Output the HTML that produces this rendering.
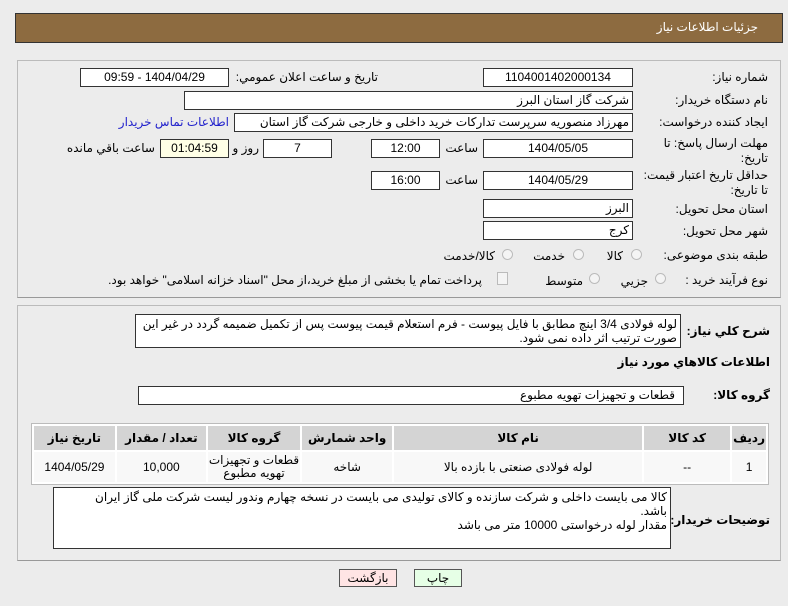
<!DOCTYPE html>
<html><head><meta charset="utf-8"><style>
body{margin:0;width:788px;height:606px;background:#ececec;font-family:"Liberation Sans","DejaVu Sans",sans-serif;font-size:12px;color:#000;position:relative;overflow:hidden;direction:rtl}
.a{position:absolute;white-space:nowrap}
.box{position:absolute;background:#fff;border:1px solid #333;box-sizing:border-box;height:19px;line-height:17px;text-align:center;font-size:12px}
.l{position:absolute;white-space:nowrap;text-align:right}
.b{font-weight:bold}
.r{position:absolute;width:11px;height:11px;border-radius:50%;border:1px solid #bbb;background:#f4f4f4;box-sizing:border-box}
table{border-collapse:separate;border-spacing:2px}
td,th{font-size:12px;text-align:center}
th{background:#d4d4d4;height:22px}
td{background:#f8f8f8;height:28px}
</style></head><body>
<div class="a" style="left:15px;top:13px;width:768px;height:30px;background:#8d6b40;border:1px solid #333;box-sizing:border-box"></div>
<div class="a" style="right:30px;top:20px;color:#fff;font-size:12px">جزئیات اطلاعات نیاز</div>

<div class="a" style="left:17px;top:60px;width:764px;height:238px;border:1px solid #bbb;border-bottom-color:#999;box-sizing:border-box"></div>

<div class="l" style="right:20px;top:70px">شماره نیاز:</div>
<div class="box" style="left:483px;top:68px;width:150px">1104001402000134</div>
<div class="l" style="right:410px;top:70px">تاریخ و ساعت اعلان عمومي:</div>
<div class="box" style="left:80px;top:68px;width:149px">1404/04/29 - 09:59</div>

<div class="l" style="right:20px;top:93px">نام دستگاه خریدار:</div>
<div class="box" style="left:184px;top:91px;width:449px;text-align:right;padding-right:3px">شرکت گاز استان البرز</div>

<div class="l" style="right:20px;top:115px">ایجاد کننده درخواست:</div>
<div class="box" style="left:234px;top:113px;width:399px;text-align:right;padding-right:3px;overflow:hidden">مهرزاد منصوریه سرپرست تدارکات خرید داخلی و خارجی شرکت گاز استان البرز</div>
<div class="l" style="right:559px;top:115px;color:#2222cc">اطلاعات تماس خریدار</div>

<div class="l" style="right:20px;top:136px;line-height:15px">مهلت ارسال پاسخ: تا<br>تاریخ:</div>
<div class="box" style="left:483px;top:139px;width:150px">1404/05/05</div>
<div class="l" style="right:310px;top:141px">ساعت</div>
<div class="box" style="left:371px;top:139px;width:69px">12:00</div>
<div class="box" style="left:263px;top:139px;width:69px">7</div>
<div class="l" style="right:529px;top:141px">روز و</div>
<div class="box" style="left:160px;top:139px;width:69px;background:#ffffe6">01:04:59</div>
<div class="l" style="right:633px;top:141px">ساعت باقي مانده</div>

<div class="l" style="right:20px;top:168px;line-height:15px">حداقل تاریخ اعتبار قیمت:<br>تا تاریخ:</div>
<div class="box" style="left:483px;top:171px;width:150px">1404/05/29</div>
<div class="l" style="right:310px;top:173px">ساعت</div>
<div class="box" style="left:371px;top:171px;width:69px">16:00</div>

<div class="l" style="right:20px;top:202px">استان محل تحویل:</div>
<div class="box" style="left:483px;top:199px;width:150px;text-align:right;padding-right:3px">البرز</div>
<div class="l" style="right:20px;top:224px">شهر محل تحویل:</div>
<div class="box" style="left:483px;top:221px;width:150px;text-align:right;padding-right:3px">کرج</div>

<div class="l" style="right:20px;top:248px">طبقه بندی موضوعی:</div>
<div class="r" style="left:631px;top:249px"></div><div class="l" style="right:165px;top:249px">کالا</div>
<div class="r" style="left:573px;top:249px"></div><div class="l" style="right:223px;top:249px">خدمت</div>
<div class="r" style="left:502px;top:249px"></div><div class="l" style="right:293px;top:249px">کالا/خدمت</div>

<div class="l" style="right:20px;top:273px">نوع فرآیند خرید :</div>
<div class="r" style="left:655px;top:273px"></div><div class="l" style="right:140px;top:274px">جزيي</div>
<div class="r" style="left:589px;top:273px"></div><div class="l" style="right:205px;top:274px">متوسط</div>
<div class="a" style="left:497px;top:272px;width:9px;height:11px;border:1px solid #bbb;background:#f4f4f4"></div>
<div class="l" style="right:306px;top:273px">پرداخت تمام یا بخشی از مبلغ خرید،از محل "اسناد خزانه اسلامی" خواهد بود.</div>

<div class="a" style="left:17px;top:305px;width:764px;height:256px;border:1px solid #bbb;border-bottom-color:#999;box-sizing:border-box"></div>
<div class="l b" style="right:18px;top:324px">شرح کلي نیاز:</div>
<div class="a" style="left:135px;top:314px;width:546px;height:34px;background:#fff;border:1px solid #333;box-sizing:border-box;white-space:normal;text-align:right;padding:2px 3px;line-height:14px">لوله فولادی 3/4 اینچ مطابق با فایل پیوست - فرم استعلام قیمت پیوست پس از تکمیل ضمیمه گردد در غیر این صورت ترتیب اثر داده نمی شود.</div>
<div class="l b" style="right:18px;top:355px">اطلاعات کالاهاي مورد نیاز</div>
<div class="l b" style="right:18px;top:388px">گروه کالا:</div>
<div class="box" style="left:138px;top:386px;width:546px;text-align:right;padding-right:8px">قطعات و تجهیزات تهویه مطبوع</div>

<table class="a" style="left:31px;top:423px;width:738px;border:1px solid #bbb;background:#fff">
<tr><th style="width:26px">ردیف</th><th style="width:84px">کد کالا</th><th style="width:246px">نام کالا</th><th style="width:88px">واحد شمارش</th><th style="width:88px">گروه کالا</th><th style="width:87px">تعداد / مقدار</th><th>تاریخ نیاز</th></tr>
<tr><td>1</td><td>--</td><td>لوله فولادی صنعتی با بازده بالا</td><td>شاخه</td><td style="line-height:13px">قطعات و تجهیزات<br>تهویه مطبوع</td><td>10,000</td><td>1404/05/29</td></tr>
</table>

<div class="l b" style="right:18px;top:513px">توضیحات خریدار:</div>
<div class="a" style="left:53px;top:487px;width:618px;height:62px;background:#fff;border:1px solid #333;box-sizing:border-box;white-space:normal;text-align:right;padding:2px 3px 2px 30px;line-height:14px">کالا می بایست داخلی و شرکت سازنده و کالای تولیدی می بایست در نسخه چهارم وندور لیست شرکت ملی گاز ایران باشد.<br>مقدار لوله درخواستی 10000 متر می باشد</div>

<div class="a" style="left:339px;top:569px;width:58px;height:18px;background:#ffe4e4;border:1px solid #555;box-sizing:border-box;text-align:center;line-height:16px">بازگشت</div>
<div class="a" style="left:414px;top:569px;width:48px;height:18px;background:#e6ffe6;border:1px solid #555;box-sizing:border-box;text-align:center;line-height:16px">چاپ</div>
</body></html>
